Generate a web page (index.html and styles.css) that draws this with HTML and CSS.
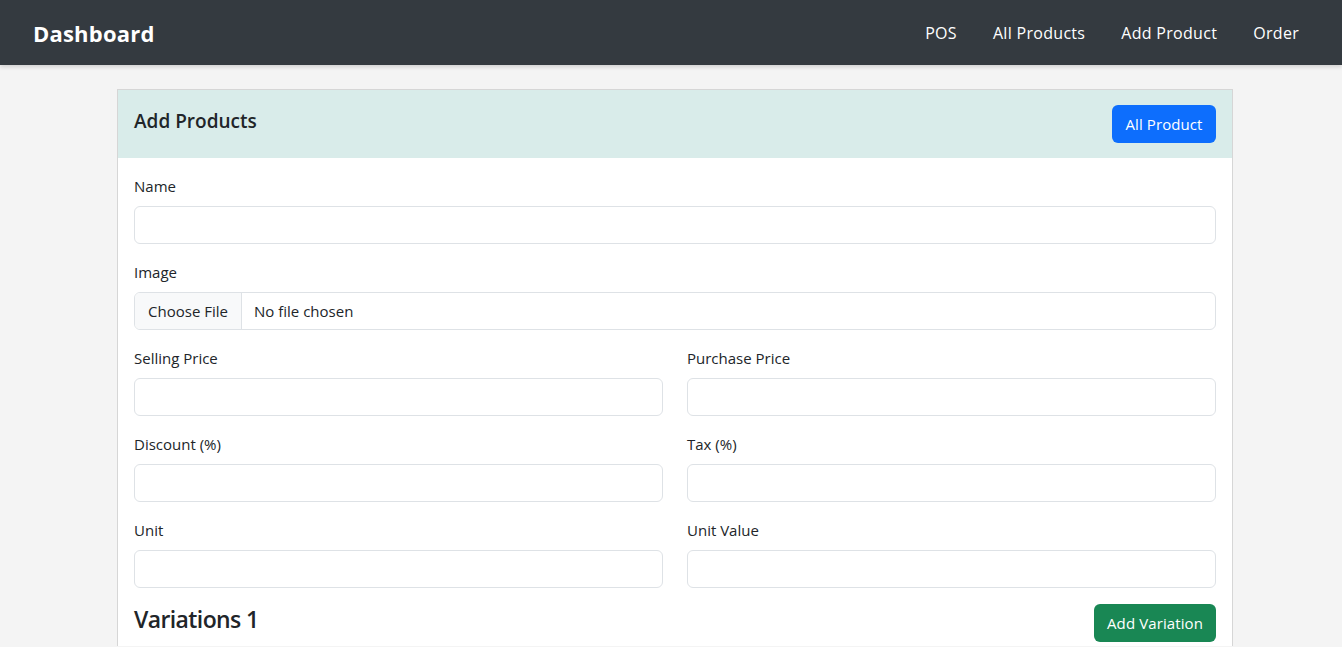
FILE: index.html
```html
<!DOCTYPE html>
<html lang="en">
<head>
<meta charset="utf-8">
<title>Dashboard</title>
<link rel="stylesheet" href="styles.css">
</head>
<body>
<nav class="navbar">
  <a class="brand" href="#">Dashboard</a>
  <ul class="nav-links">
    <li><a href="#">POS</a></li>
    <li><a href="#">All Products</a></li>
    <li><a href="#">Add Product</a></li>
    <li><a href="#">Order</a></li>
  </ul>
</nav>
<main class="container">
  <section class="card">
    <header class="card-header">
      <h5 class="card-title">Add Products</h5>
      <a class="btn btn-primary" href="#">All Product</a>
    </header>
    <div class="card-body">
      <div class="field">
        <label class="label">Name</label>
        <div class="input"></div>
      </div>
      <div class="field">
        <label class="label">Image</label>
        <div class="input file-input"><span class="file-btn">Choose File</span><span class="file-name">No file chosen</span></div>
      </div>
      <div class="grid">
        <div class="field">
          <label class="label">Selling Price</label>
          <div class="input"></div>
        </div>
        <div class="field">
          <label class="label">Purchase Price</label>
          <div class="input"></div>
        </div>
        <div class="field">
          <label class="label">Discount (%)</label>
          <div class="input"></div>
        </div>
        <div class="field">
          <label class="label">Tax (%)</label>
          <div class="input"></div>
        </div>
        <div class="field">
          <label class="label">Unit</label>
          <div class="input"></div>
        </div>
        <div class="field">
          <label class="label">Unit Value</label>
          <div class="input"></div>
        </div>
      </div>
      <div class="variations">
        <h4 class="var-title">Variations 1</h4>
        <a class="btn btn-success" href="#">Add Variation</a>
      </div>
    </div>
  </section>
</main>
</body>
</html>
```
FILE: styles.css
```css
* { box-sizing: border-box; }
html, body { margin: 0; padding: 0; }
body {
  background: #f4f4f4;
  font-family: "Open Sans", "Noto Sans", sans-serif;
  font-size: 15px;
  color: #212529;
  line-height: 24px;
}
a { text-decoration: none; }
.navbar {
  height: 65px;
  background: #343a40;
  display: flex;
  align-items: center;
  justify-content: space-between;
  padding: 0 25px 0 33px;
  box-shadow: 0 2px 4px rgba(0,0,0,0.15);
}
.brand {
  color: #fff;
  font-weight: 700;
  font-size: 22px;
  letter-spacing: 0.2px;
}
.nav-links {
  list-style: none;
  margin: 0;
  padding: 0;
  display: flex;
}
.nav-links a {
  display: block;
  color: #fff;
  font-size: 16px;
  padding: 8px 18px;
  letter-spacing: 0.3px;
}
.container {
  width: 1116px;
  margin: 24px 0 0 117px;
}
.card {
  background: #fff;
  border: 1px solid #d6d6d6;
  border-bottom: none;
}
.card-header {
  height: 68px;
  background: #d9ecea;
  display: flex;
  align-items: center;
  justify-content: space-between;
  padding: 0 16px;
}
.card-title {
  margin: 0 0 6px;
  font-size: 19px;
  font-weight: 600;
}
.btn {
  display: inline-flex;
  align-items: center;
  justify-content: center;
  height: 38px;
  padding: 0 12px;
  border-radius: 6px;
  color: #fff;
  font-size: 15px;
  letter-spacing: 0.1px;
}
.btn-primary { background: #0d6efd; }
.btn-success { background: #198754; }
.card-header .btn { width: 104px; }
.card-body { padding: 16px 16px 0; }
.field { margin-bottom: 16px; }
.label {
  display: block;
  margin-bottom: 8px;
  font-size: 15px;
  height: 24px;
}
.input {
  height: 38px;
  border: 1px solid #dee2e6;
  border-radius: 6px;
  background: #fff;
}
.file-input {
  display: flex;
  align-items: stretch;
  overflow: hidden;
}
.file-btn {
  background: #f8f9fa;
  border-right: 1px solid #dee2e6;
  width: 107px;
  display: flex;
  align-items: center;
  justify-content: center;
}
.file-name {
  display: flex;
  align-items: center;
  padding-left: 12px;
}
.grid {
  display: grid;
  grid-template-columns: 1fr 1fr;
  column-gap: 24px;
}
.variations {
  display: flex;
  justify-content: space-between;
  align-items: flex-start;
  height: 42px;
}
.var-title {
  margin: 0;
  font-size: 23px;
  font-weight: 600;
  line-height: 30px;
  letter-spacing: -0.6px;
}
.variations .btn { width: 122px; }
```
